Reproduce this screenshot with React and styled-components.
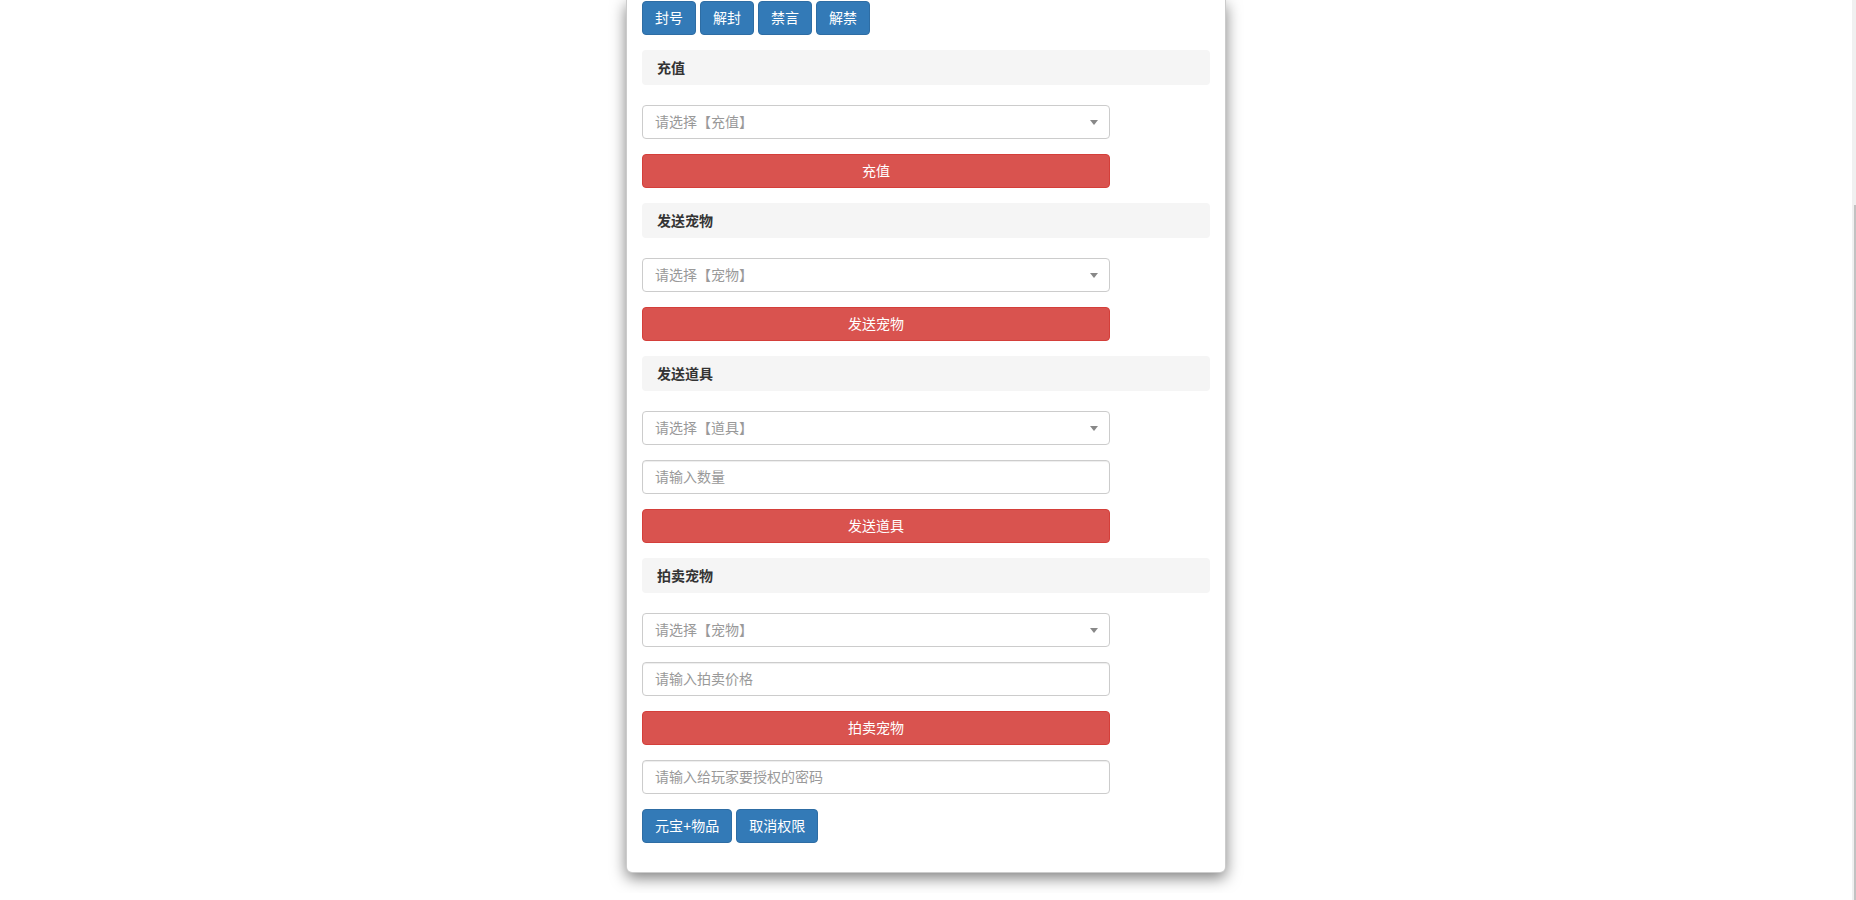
import React from 'react';
import styled, { createGlobalStyle } from 'styled-components';

const GlobalStyle = createGlobalStyle`
  *, *::before, *::after { box-sizing: border-box; }
  html, body { margin: 0; padding: 0; background: #fff; }
  body {
    padding-right: 4px;
    font-family: "Liberation Sans", "Noto Sans CJK SC", sans-serif;
    font-size: 14px;
    line-height: 1.42857;
    color: #333;
  }
`;

/* thin browser scrollbar at the right edge (page is scrolled down) */
const ScrollTrack = styled.div`
  position: fixed;
  top: 0;
  right: 0;
  width: 4px;
  height: 100vh;
  background: #f0f0f0;
  display: flex;
  flex-direction: column;
  align-items: flex-end;
  padding-top: 205px;
`;

const ScrollThumb = styled.div`
  width: 2px;
  flex: 1;
  background: #c2c2c2;
`;

const Dialog = styled.div`
  width: 600px;
  margin: 0 auto 20px;
`;

const Content = styled.div`
  background: #fff;
  border: 1px solid rgba(0, 0, 0, 0.2);
  border-top: 0;
  border-radius: 0 0 6px 6px;
  box-shadow: 0 5px 15px rgba(0, 0, 0, 0.5);
`;

const ModalBody = styled.div`
  padding: 1px 15px 14px;
`;

const SectionTitle = styled.div`
  background: #f5f5f5;
  border-radius: 4px;
  padding: 8px 15px 7px;
  line-height: 20px;
  font-weight: bold;
  color: #333;
  margin-bottom: 20px;
`;

const Group = styled.div`
  margin-bottom: 15px;
  width: 468px;
`;

const ButtonRow = styled.div`
  display: flex;
  gap: 4px;
  margin-bottom: 15px;
`;

const Btn = styled.button`
  display: inline-block;
  height: 34px;
  padding: 6px 12px;
  font-family: inherit;
  font-size: 14px;
  line-height: 20px;
  border-radius: 4px;
  border: 1px solid ${p => (p.$variant === 'danger' ? '#d43f3a' : '#2e6da4')};
  background: ${p => (p.$variant === 'danger' ? '#d9534f' : '#337ab7')};
  color: #fff;
  white-space: nowrap;
  cursor: pointer;
  width: ${p => (p.$block ? '100%' : 'auto')};
`;

const SelectBox = styled.div`
  display: flex;
  align-items: center;
  justify-content: space-between;
  height: 34px;
  padding: 6px 12px;
  border: 1px solid #ccc;
  border-radius: 4px;
  background: #fff;
  color: #999;
  line-height: 20px;
  cursor: pointer;
`;

const Arrow = styled.span`
  width: 0;
  height: 0;
  border-style: solid;
  border-width: 5px 4px 0 4px;
  border-color: #888 transparent transparent transparent;
  margin-right: -1px;
`;

const Input = styled.input`
  display: block;
  width: 100%;
  height: 34px;
  padding: 6px 12px;
  font-family: inherit;
  font-size: 14px;
  line-height: 20px;
  color: #555;
  background: #fff;
  border: 1px solid #ccc;
  border-radius: 4px;
  box-shadow: inset 0 1px 1px rgba(0, 0, 0, 0.075);
  outline: none;
  &::placeholder { color: #999; }
`;

const Select = ({ label }) => (
  <Group>
    <SelectBox role="combobox">
      <span>{label}</span>
      <Arrow />
    </SelectBox>
  </Group>
);

const Field = ({ placeholder }) => (
  <Group>
    <Input placeholder={placeholder} />
  </Group>
);

const Action = ({ children }) => (
  <Group>
    <Btn $variant="danger" $block>{children}</Btn>
  </Group>
);

export default function App() {
  return (
    <>
      <GlobalStyle />
      <Dialog>
        <Content>
          <ModalBody>
            <ButtonRow>
              <Btn>封号</Btn>
              <Btn>解封</Btn>
              <Btn>禁言</Btn>
              <Btn>解禁</Btn>
            </ButtonRow>

            <SectionTitle>充值</SectionTitle>
            <Select label="请选择【充值】" />
            <Action>充值</Action>

            <SectionTitle>发送宠物</SectionTitle>
            <Select label="请选择【宠物】" />
            <Action>发送宠物</Action>

            <SectionTitle>发送道具</SectionTitle>
            <Select label="请选择【道具】" />
            <Field placeholder="请输入数量" />
            <Action>发送道具</Action>

            <SectionTitle>拍卖宠物</SectionTitle>
            <Select label="请选择【宠物】" />
            <Field placeholder="请输入拍卖价格" />
            <Action>拍卖宠物</Action>

            <Field placeholder="请输入给玩家要授权的密码" />
            <ButtonRow>
              <Btn>元宝+物品</Btn>
              <Btn>取消权限</Btn>
            </ButtonRow>
          </ModalBody>
        </Content>
      </Dialog>
      <ScrollTrack>
        <ScrollThumb />
      </ScrollTrack>
    </>
  );
}
